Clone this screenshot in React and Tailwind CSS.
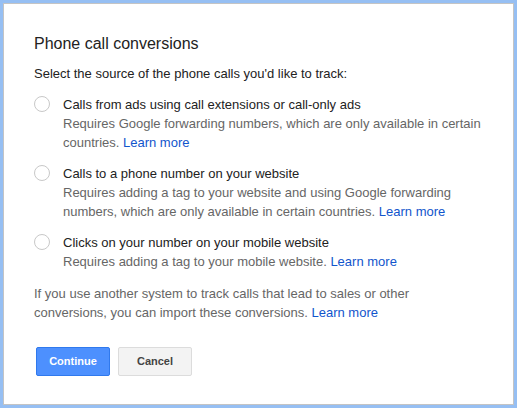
import React from "react";

const options = [
    {
        title: "Calls from ads using call extensions or call-only ads",
        desc: "Requires Google forwarding numbers, which are only available in certain countries.",
    },
    {
        title: "Calls to a phone number on your website",
        desc: "Requires adding a tag to your website and using Google forwarding numbers, which are only available in certain countries.",
    },
    {
        title: "Clicks on your number on your mobile website",
        desc: "Requires adding a tag to your mobile website.",
    },
];

const LearnMore = () => <a className="text-[#1155cc] cursor-pointer">Learn more</a>;

const App = () => {
    return (
        <div className="w-[517px] h-[408px] bg-white border-[3px] border-[#96bff3] font-['Liberation_Sans',Arial,sans-serif]">
            <div className="h-full border border-[#c4c4c4] pl-[30px] pr-[24px] pt-[30px] text-[13px] leading-[19px] text-[#222]">
                <h2 className="text-[16px] leading-[20px] text-[#222]">Phone call conversions</h2>
                <p className="mt-[10px]">Select the source of the phone calls you'd like to track:</p>

                <div className="mt-[12px] flex flex-col gap-[12px]">
                    {options.map((opt) => (
                        <label key={opt.title} className="flex items-start">
                            <span className="mt-[1px] w-[16px] h-[16px] rounded-full border border-[#c8c8c8] bg-white shrink-0" />
                            <span className="ml-[13px]">
                                <span className="block text-[#222]">{opt.title}</span>
                                <span className="block text-[#666]">
                                    {opt.desc} <LearnMore />
                                </span>
                            </span>
                        </label>
                    ))}
                </div>

                <p className="mt-[13px] text-[#666] pr-[20px]">
                    If you use another system to track calls that lead to sales or other conversions, you can import these conversions. <LearnMore />
                </p>

                <div className="mt-[25px] flex gap-[8px] pl-[2px]">
                    <button className="w-[74px] h-[29px] rounded-[2px] bg-[#4d90fe] border border-[#3079ed] text-white text-[11px] font-bold">
                        Continue
                    </button>
                    <button className="w-[74px] h-[29px] rounded-[2px] bg-[#f3f3f3] border border-[#dcdcdc] text-[#444] text-[11px] font-bold">
                        Cancel
                    </button>
                </div>
            </div>
        </div>
    );
};

export default App;
